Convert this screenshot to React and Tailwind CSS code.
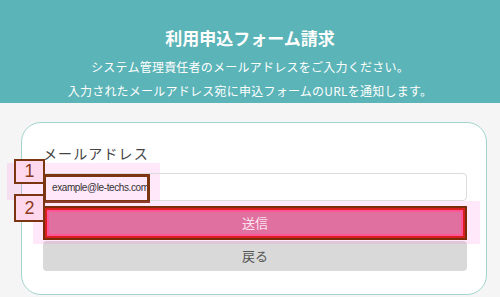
import React from "react";

const jp = "font-['Noto_Sans_CJK_JP',sans-serif]";

// numbered callout badge drawn over the screenshot
const Badge = ({ n, className }) => (
  <span
    className={`pointer-events-none absolute left-[-29px] flex w-[31px] items-center justify-center border-2 border-[#7b3510] bg-[#ffd8ee] font-['Liberation_Sans',sans-serif] text-[18px] text-[#8b3a1a] ${className}`}
  >
    {n}
  </span>
);

const App = () => {
  return (
    <div className={`h-[297px] w-[500px] overflow-hidden bg-[#f5f5f5] ${jp}`}>
      <header className="flex h-[103px] flex-col items-center bg-[#5bb4b7] pt-[27px] text-white">
        <h1 className="text-[17px] font-bold leading-[22px]">利用申込フォーム請求</h1>
        <p className="mt-[6px] text-[12px] leading-[24px] tracking-[0.02em]">
          システム管理責任者のメールアドレスをご入力ください。
        </p>
        <p className="text-[12px] leading-[24px] tracking-[0.02em]">
          入力されたメールアドレス宛に申込フォームのURLを通知します。
        </p>
      </header>

      <main className="ml-[21px] mt-[19px] h-[173px] w-[466px] rounded-[20px] border border-[#a3d4cf] bg-white pl-[21px] pr-[19px] pt-[20px]">
        <label className="block text-[14px] leading-[20px] tracking-[0.08em] text-[#444]">
          メールアドレス
        </label>

        <div className="relative mt-[10px]">
          <span className="pointer-events-none absolute left-[-36px] top-[-10px] h-[37px] w-[153px] bg-[#ff66dd]/15" />
          <div className="relative flex h-[28px] items-center rounded-[4px] border border-[#dcdcdc] px-[8px] font-['Liberation_Sans',sans-serif] text-[10px] tracking-[-0.04em] text-[#333]">
            example@le-techs.com
          </div>
          <span className="pointer-events-none absolute left-0 top-px h-[29px] w-[107px] border-[3px] border-[#7b3510]" />
          <Badge n="1" className="top-[-14px] h-[25px]" />
        </div>

        <div className="relative mt-[7px]">
          <span className="pointer-events-none absolute left-[-10px] top-[-7px] h-[43px] w-[447px] bg-[#ff66dd]/15" />
          <button
            type="button"
            className="relative flex h-[30px] w-full items-center justify-center rounded-[4px] bg-[#e0709f] text-[13px] text-[#fde3ee]"
          >
            送信
          </button>
          <span className="pointer-events-none absolute inset-x-0 -bottom-[2px] -top-[2px] border-2 border-[#7b2a0a] shadow-[inset_0_0_0_2px_#d81e1e,inset_0_0_0_4px_#ff5596]" />
          <Badge n="2" className="top-[-14px] h-[28px]" />
        </div>

        <button
          type="button"
          className="mt-[3px] flex h-[30px] w-full items-center justify-center rounded-[4px] bg-[#d9d9d9] text-[13px] text-[#555]"
        >
          戻る
        </button>
      </main>
    </div>
  );
};

export default App;
